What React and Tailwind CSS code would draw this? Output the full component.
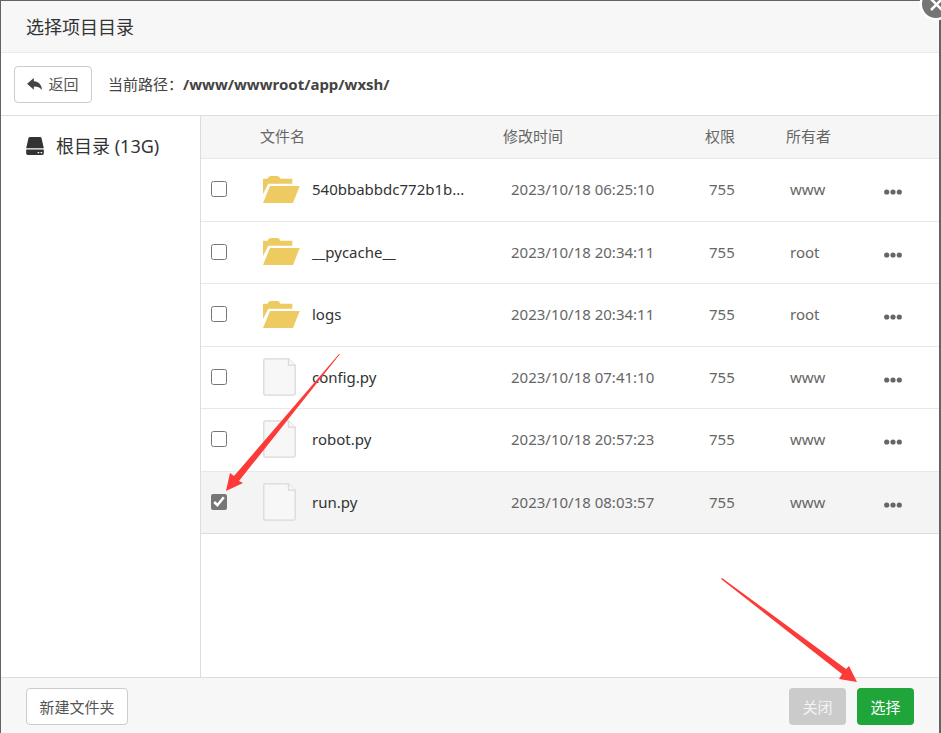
import { useState } from 'react';

const initialFiles = [
    { name: '540bbabbdc772b1b...', type: 'dir', time: '2023/10/18 06:25:10', mode: '755', owner: 'www' },
    { name: '__pycache__', type: 'dir', time: '2023/10/18 20:34:11', mode: '755', owner: 'root' },
    { name: 'logs', type: 'dir', time: '2023/10/18 20:34:11', mode: '755', owner: 'root' },
    { name: 'config.py', type: 'file', time: '2023/10/18 07:41:10', mode: '755', owner: 'www' },
    { name: 'robot.py', type: 'file', time: '2023/10/18 20:57:23', mode: '755', owner: 'www' },
    { name: 'run.py', type: 'file', time: '2023/10/18 08:03:57', mode: '755', owner: 'www' },
];

const FolderIcon = () => (
    <svg viewBox="0 0 111 81" className="w-[37px] h-[27px] shrink-0" fill="#edcb60" aria-hidden="true">
        <path d="M0 8H14Q16 0 23 0H43Q50 0 52 8H88V23H16L0 54Z" />
        <path d="M21 30H110L90 81H0Z" />
    </svg>
);

const FileIcon = () => (
    <svg viewBox="0 0 33 38" className="w-[33px] h-[38px] shrink-0" fill="#f7f7f7" stroke="#d9d9d9" aria-hidden="true">
        <path d="M2.5 .8H25.5L32.2 7.5V35.5Q32.2 37.2 30.5 37.2H2.5Q.8 37.2 .8 35.5V2.5Q.8 .8 2.5 .8Z" strokeWidth="1.3" />
        <path d="M25.5 .8V7.2H32.2" strokeWidth="1.3" />
    </svg>
);

const ReplyIcon = () => (
    <svg viewBox="0 0 46 37" className="w-[15px] h-3" fill="#444" aria-hidden="true">
        <path d="M0 18L21 0V10C36 11 45 20 46 37C40 29 34 26 21 26V36Z" />
    </svg>
);

const DiskIcon = () => (
    <svg viewBox="0 0 54 55" className="w-[18px] h-[18px]" fill="#333" aria-hidden="true">
        <path d="M12 0H42Q46 0 47 4L54 34H0L7 4Q8 0 12 0Z" />
        <path fillRule="evenodd" d="M2 38H52Q54 38 54 40V50Q54 55 49 55H5Q0 55 0 50V40Q0 38 2 38ZM35 46V50H40V46ZM44 46V50H49V46Z" />
    </svg>
);

const App = () => {
    const [selected, setSelected] = useState(['run.py']);

    const toggle = (name) => {
        if (selected.includes(name)) {
            setSelected(selected.filter((n) => n !== name));
        } else {
            setSelected([...selected, name]);
        }
    };

    return (
        <div className="relative overflow-hidden min-h-screen flex flex-col bg-[#636363] pt-px pl-px pr-0.5 font-['Noto_Sans','Noto_Sans_CJK_SC',sans-serif] text-[15px] leading-5 text-[#666]">
            <div className="flex-1 flex flex-col bg-white">
                {/* Title */}
                <header className="h-[52px] flex items-center px-[25px] bg-[#f7f7f7] border-b border-[#eaeaea]">
                    <h1 className="text-lg text-[#333]">选择项目目录</h1>
                </header>

                {/* Current path */}
                <div className="h-[63px] flex items-center gap-4 px-[13px] border-b border-[#ddd]">
                    <button type="button" className="h-[37px] w-[78px] flex items-center justify-center gap-1.5 border border-[#ccc] rounded bg-white text-[#555]">
                        <ReplyIcon />
                        <span>返回</span>
                    </button>
                    <div className="text-[#444]">
                        <span>当前路径：</span>
                        <b className="font-bold">/www/wwwroot/app/wxsh/</b>
                    </div>
                </div>

                <main className="flex-1 flex">
                    <aside className="w-[200px] shrink-0 border-r border-[#ddd] pt-[18px] pl-[25px]">
                        <a href="#" className="flex items-center gap-3 text-lg leading-6 text-[#333]">
                            <DiskIcon />
                            <span>根目录 (13G)</span>
                        </a>
                    </aside>

                    <div className="flex-1">
                        <table className="w-full table-fixed border-separate border-spacing-0 text-left">
                            <thead>
                                <tr className="h-[43px] bg-[#f6f6f6] [&>th]:border-b [&>th]:border-[#e8e8e8] [&>th]:font-normal [&>th]:pl-2 [&>th]:pb-0.5">
                                    <th className="w-[51px]"></th>
                                    <th>文件名</th>
                                    <th className="w-[202px]">修改时间</th>
                                    <th className="w-[81px]">权限</th>
                                    <th className="w-[90px]">所有者</th>
                                    <th className="w-[71px]"></th>
                                </tr>
                            </thead>
                            <tbody>
                                {files(selected).map((file) => (
                                    <tr
                                        key={file.name}
                                        className={`h-[63px] even:h-[62px] [&>td]:border-b [&>td]:border-[#e8e8e8] last:[&>td]:border-[#ddd] ${file.checked ? 'bg-[#f4f4f4]' : 'bg-white'}`}
                                    >
                                        <td className="pl-2.5 pb-0.5">
                                            <input
                                                type="checkbox"
                                                aria-label={file.name}
                                                checked={file.checked}
                                                onChange={() => toggle(file.name)}
                                                className="block w-4 h-4 accent-[#767676]"
                                            />
                                        </td>
                                        <td className="pl-[11px] pb-0.5">
                                            <a href="#" className="flex items-center text-[#333]">
                                                <span className="w-[49px] shrink-0">
                                                    {file.type === 'dir' ? <FolderIcon /> : <FileIcon />}
                                                </span>
                                                <span>{file.name}</span>
                                            </a>
                                        </td>
                                        <td className="pl-4 pb-0.5">{file.time}</td>
                                        <td className="pl-3 pb-0.5">{file.mode}</td>
                                        <td className="pl-3 pb-0.5">{file.owner}</td>
                                        <td className="pl-4 pt-1">
                                            <button type="button" aria-label="更多" className="flex">
                                                <svg viewBox="0 0 18 6" className="w-[18px] h-1.5" fill="#666" aria-hidden="true">
                                                    <circle cx="2.7" cy="3" r="2.6" />
                                                    <circle cx="9" cy="3" r="2.6" />
                                                    <circle cx="15.3" cy="3" r="2.6" />
                                                </svg>
                                            </button>
                                        </td>
                                    </tr>
                                ))}
                            </tbody>
                        </table>
                    </div>
                </main>

                {/* Actions */}
                <footer className="h-14 flex items-center pt-0.5 px-[25px] bg-[#f7f7f7] border-t border-[#ddd]">
                    <button type="button" className="h-[37px] w-[102px] border border-[#ccc] rounded bg-white text-[#555]">新建文件夹</button>
                    <div className="ml-auto flex gap-[11px]">
                        <button type="button" className="h-[37px] w-[57px] rounded bg-[#cbcbcb] text-[#f4f4f4]">关闭</button>
                        <button type="button" className="h-[37px] w-[57px] rounded bg-[#20a53a] text-white">选择</button>
                    </div>
                </footer>
            </div>

            {/* Close badge */}
            <button type="button" aria-label="关闭窗口" className="absolute -top-[13px] -right-3">
                <svg viewBox="0 0 34 34" className="block w-[34px] h-[34px]" aria-hidden="true">
                    <circle cx="17" cy="17" r="16.5" fill="#fff" />
                    <circle cx="17" cy="17" r="14" fill="#757575" />
                    <path d="M12 12L23 23M23 12L12 23" stroke="#fff" strokeWidth="2.6" />
                </svg>
            </button>

            {/* Red pointers */}
            <svg viewBox="0 0 114 137" className="absolute left-[226px] top-[354px] w-[114px] h-[137px] pointer-events-none" fill="#fc3a38" aria-hidden="true">
                <path d="M0 137L4 119L8 122L113 0H114L13 127L17 129Z" />
            </svg>
            <svg viewBox="0 0 136 104" className="absolute right-[84px] bottom-[51px] w-[136px] h-[104px] pointer-events-none" fill="#fc3a38" aria-hidden="true">
                <path d="M136 104L128 88L125 91L1 0L0 1L121 96L118 101Z" />
            </svg>
        </div>
    );
};

const files = (selected) => initialFiles.map((f) => ({ ...f, checked: selected.includes(f.name) }));

export default App;
